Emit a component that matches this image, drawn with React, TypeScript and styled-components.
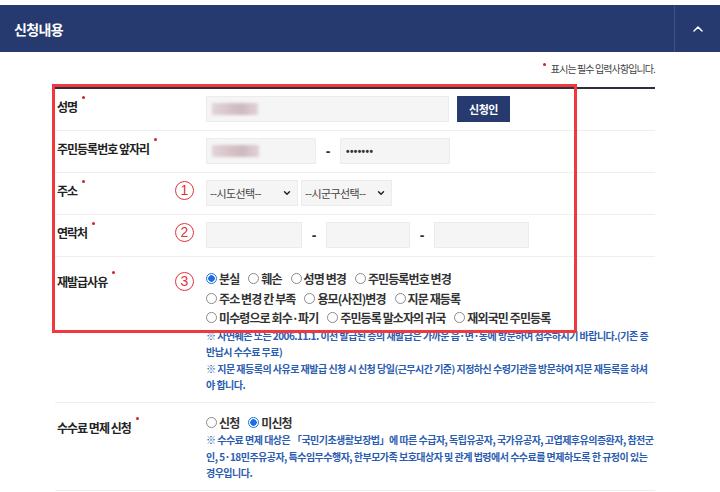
import { FC } from "react";
import styled, { createGlobalStyle } from "styled-components";
import { ChevronUp, ChevronDown } from "lucide-react";

const GlobalStyle = createGlobalStyle`
  html, body {
    margin: 0;
    padding: 0;
    background: #ffffff;
  }
  body {
    font-family: "Noto Sans CJK KR", "Noto Sans", sans-serif;
    color: #222222;
  }
`;

type RadioItem = { label: string; checked?: boolean };

const reasons: RadioItem[][] = [
  [
    { label: "분실", checked: true },
    { label: "훼손" },
    { label: "성명 변경" },
    { label: "주민등록번호 변경" },
  ],
  [{ label: "주소 변경 칸 부족" }, { label: "용모(사진)변경" }, { label: "지문 재등록" }],
  [
    { label: "미수령으로 회수·파기" },
    { label: "주민등록 말소자의 귀국" },
    { label: "재외국민 주민등록" },
  ],
];

const Radio: FC<RadioItem> = ({ label, checked }) => (
  <RadioLabel>
    <RadioMark $checked={!!checked} />
    {label}
  </RadioLabel>
);

const App: FC = () => {
  return (
    <Page>
      <GlobalStyle />
      <Header>
        <Title>신청내용</Title>
        <Toggle>
          <ChevronUp size={16} color="#ffffff" strokeWidth={2.2} />
        </Toggle>
      </Header>

      <Body>
        <RequiredNote>
          <NoteDot />
          표시는 필수 입력사항입니다.
        </RequiredNote>

        <Table>
          <Row>
            <LabelCell>
              <Label>
                성명
                <ReqDot />
              </Label>
            </LabelCell>
            <ValueCell>
              <Field $w={243}>
                <Blur $w={46} />
              </Field>
              <NavyButton>신청인</NavyButton>
            </ValueCell>
          </Row>

          <Row>
            <LabelCell>
              <Label>
                주민등록번호 앞자리
                <ReqDot />
              </Label>
            </LabelCell>
            <ValueCell>
              <Field $w={110}>
                <Blur $w={47} />
              </Field>
              <Dash>-</Dash>
              <Field $w={110}>
                <Secret>•••••••</Secret>
              </Field>
            </ValueCell>
          </Row>

          <Row>
            <LabelCell>
              <Label>
                주소
                <ReqDot />
              </Label>
              <Circled>1</Circled>
            </LabelCell>
            <ValueCell $gap={3}>
              <SelectBox $w={92}>
                --시도선택--
                <ChevronDown size={10} strokeWidth={3.5} color="#222" />
              </SelectBox>
              <SelectBox $w={91}>
                --시군구선택--
                <ChevronDown size={10} strokeWidth={3.5} color="#222" />
              </SelectBox>
            </ValueCell>
          </Row>

          <Row>
            <LabelCell>
              <Label>
                연락처
                <ReqDot />
              </Label>
              <Circled>2</Circled>
            </LabelCell>
            <ValueCell>
              <Field $w={96} />
              <Dash>-</Dash>
              <Field $w={84} />
              <Dash>-</Dash>
              <Field $w={95} />
            </ValueCell>
          </Row>

          <Row $top>
            <LabelCell $pad={14}>
              <Label>
                재발급사유
                <ReqDot />
              </Label>
              <Circled>3</Circled>
            </LabelCell>
            <ValueCell $column $pad={12}>
              {reasons.map((line, i) => (
                <RadioLine key={i}>
                  {line.map(r => (
                    <Radio key={r.label} {...r} />
                  ))}
                </RadioLine>
              ))}
              <Notice>
                ※ 자연훼손 또는 2006.11.1. 이전 발급된 증의 재발급은 가까운 읍·면·동에 방문하여 접수하시기 바랍니다.(기존 증
                반납시 수수료 무료)
              </Notice>
              <Notice>
                ※ 지문 재등록의 사유로 재발급 신청 시 신청 당일(근무시간 기준) 지정하신 수령기관을 방문하여 지문 재등록을 하셔야
                합니다.
              </Notice>
            </ValueCell>
          </Row>

          <Row $top>
            <LabelCell $pad={14}>
              <Label>
                수수료 면제 신청
                <ReqDot />
              </Label>
            </LabelCell>
            <ValueCell $column $pad={10}>
              <RadioLine>
                <Radio label="신청" />
                <Radio label="미신청" checked />
              </RadioLine>
              <Notice>
                ※ 수수료 면제 대상은 「국민기초생활보장법」에 따른 수급자, 독립유공자, 국가유공자, 고엽제후유의증환자, 참전군인,
                5·18민주유공자, 특수임무수행자, 한부모가족 보호대상자 및 관계 법령에서 수수료를 면제하도록 한 규정이 있는
                경우입니다.
              </Notice>
            </ValueCell>
          </Row>
        </Table>
      </Body>

      <Highlight />
    </Page>
  );
};

const Page = styled.div`
  position: relative;
  width: 720px;
  height: 492px;
  overflow: hidden;
  background: #ffffff;
`;

const Header = styled.div`
  margin-top: 5px;
  height: 47px;
  background: #263a70;
  display: flex;
  align-items: center;
  justify-content: space-between;
`;

const Title = styled.h2`
  margin: 0 0 0 14px;
  color: #ffffff;
  font-size: 14px;
  font-weight: 700;
  letter-spacing: -0.6px;
`;

const Toggle = styled.div`
  width: 45px;
  height: 100%;
  border-left: 1px solid rgba(255, 255, 255, 0.12);
  display: flex;
  align-items: center;
  justify-content: center;
`;

const Body = styled.div`
  padding: 0 65px 0 55px;
`;

const RequiredNote = styled.p`
  margin: 10px 0 11px;
  text-align: right;
  font-size: 10px;
  line-height: 14px;
  color: #444444;
  letter-spacing: -0.9px;
`;

const NoteDot = styled.span`
  display: inline-block;
  width: 3px;
  height: 3px;
  border-radius: 50%;
  background: #d0202a;
  margin-right: 5px;
  vertical-align: 7px;
`;

const Table = styled.div`
  border-top: 2px solid #2d2f3a;
`;

const Row = styled.div<{ $top?: boolean }>`
  display: flex;
  align-items: ${p => (p.$top ? "flex-start" : "center")};
  border-bottom: 1px solid #efefef;
  padding: ${p => (p.$top ? "0" : "7px 0 8px")};
`;

const LabelCell = styled.div<{ $pad?: number }>`
  width: 137px;
  flex: none;
  padding: ${p => (p.$pad ? `${p.$pad}px` : "0")} 12px ${p => (p.$pad ? "0" : "6px")} 2px;
  display: flex;
  align-items: center;
  justify-content: space-between;
`;

const Label = styled.span`
  font-size: 12px;
  font-weight: 700;
  line-height: 18px;
  letter-spacing: -1px;
  color: #222222;
  white-space: nowrap;
`;

const ReqDot = styled.span`
  display: inline-block;
  width: 3px;
  height: 3px;
  border-radius: 50%;
  background: #d0202a;
  margin-left: 5px;
  vertical-align: 13px;
`;

const Circled = styled.span`
  width: 17px;
  height: 17px;
  border: 1.5px solid #e2333a;
  border-radius: 50%;
  color: #e2333a;
  font-family: "Liberation Sans", Arial, sans-serif;
  font-size: 14px;
  line-height: 17px;
  text-align: center;
`;

const ValueCell = styled.div<{ $column?: boolean; $gap?: number; $pad?: number }>`
  flex: 1;
  display: flex;
  flex-direction: ${p => (p.$column ? "column" : "row")};
  align-items: ${p => (p.$column ? "stretch" : "center")};
  gap: ${p => (p.$gap !== undefined ? p.$gap : 8)}px;
  ${p => (p.$column ? `gap: 0; padding: ${p.$pad || 0}px 0 8px;` : "")}
`;

const Field = styled.div<{ $w: number }>`
  width: ${p => p.$w}px;
  height: 26px;
  box-sizing: border-box;
  background: #f5f5f5;
  border: 1px solid #ececec;
  display: flex;
  align-items: center;
  padding-left: 5px;
`;

const Blur = styled.span<{ $w: number }>`
  display: block;
  width: ${p => p.$w}px;
  height: 12px;
  background: linear-gradient(90deg, #e3d4d8 0%, #d5c2c7 40%, #cdb9bf 65%, #e2d3d7 100%);
  filter: blur(1.5px);
`;

const Secret = styled.span`
  font-family: "Liberation Sans", Arial, sans-serif;
  font-size: 10px;
  font-weight: 700;
  letter-spacing: 0.4px;
  color: #333333;
`;

const Dash = styled.span`
  width: 8px;
  text-align: center;
  font-size: 14px;
  font-weight: 700;
  color: #333333;
  font-family: "Liberation Sans", Arial, sans-serif;
`;

const NavyButton = styled.button`
  width: 53px;
  height: 26px;
  border: none;
  background: #263a70;
  color: #ffffff;
  font-family: inherit;
  font-size: 11px;
  font-weight: 700;
  letter-spacing: -0.5px;
  padding: 0;
`;

const SelectBox = styled.div<{ $w: number }>`
  width: ${p => p.$w}px;
  height: 26px;
  box-sizing: border-box;
  background: #f5f5f5;
  border: 1px solid #ececec;
  display: flex;
  align-items: center;
  justify-content: space-between;
  padding: 0 5px 0 3px;
  font-size: 11px;
  letter-spacing: -0.6px;
  color: #444444;
`;

const RadioLine = styled.div`
  display: flex;
  gap: 9px;
  height: 19.5px;
  align-items: center;
`;

const RadioLabel = styled.label`
  display: flex;
  align-items: center;
  gap: 2px;
  font-size: 12px;
  font-weight: 700;
  letter-spacing: -0.9px;
  color: #333333;
  white-space: nowrap;
`;

const RadioMark = styled.span<{ $checked: boolean }>`
  width: 11px;
  height: 11px;
  box-sizing: border-box;
  border-radius: 50%;
  border: 1px solid ${p => (p.$checked ? "#1a6fe0" : "#8a8a8a")};
  background: ${p => (p.$checked ? "radial-gradient(circle, #1a6fe0 0 3px, #ffffff 3.5px)" : "#ffffff")};
`;

const Notice = styled.p`
  margin: 0;
  font-size: 10px;
  line-height: 16.5px;
  letter-spacing: -0.52px;
  color: #2a5cb0;
  font-weight: 700;
`;

const Highlight = styled.div`
  position: absolute;
  left: 52px;
  top: 84px;
  width: 525px;
  height: 249px;
  box-sizing: border-box;
  border: 3px solid #f0393f;
  pointer-events: none;
`;

export default App;
